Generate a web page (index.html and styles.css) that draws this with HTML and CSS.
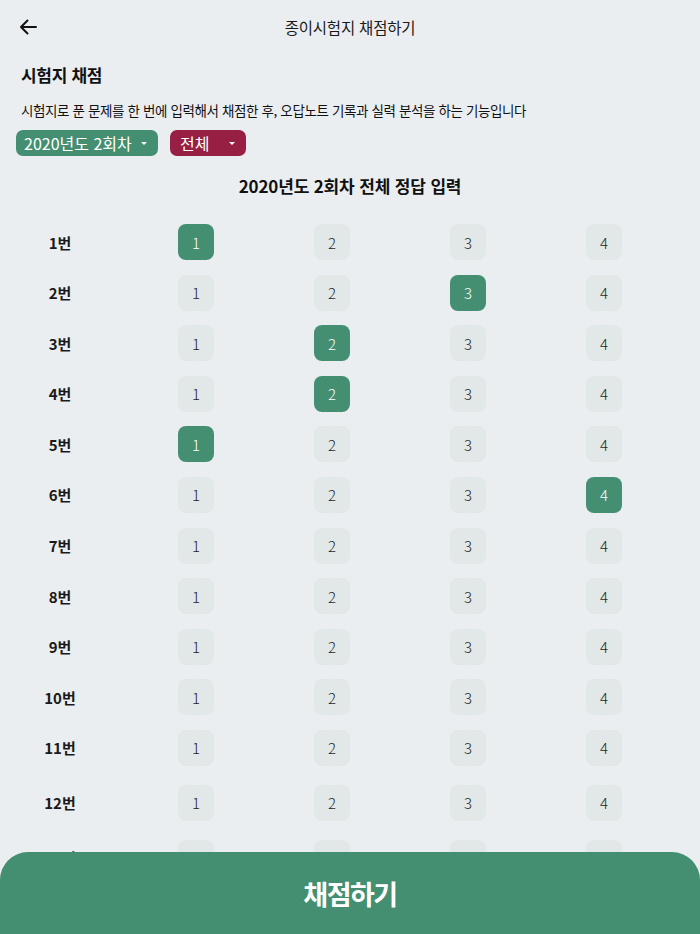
FILE: index.html
```html
<!DOCTYPE html>
<html lang="ko">
<head>
<meta charset="utf-8">
<title>종이시험지 채점하기</title>
<link rel="stylesheet" href="styles.css">
</head>
<body>
<header class="header">
  <svg class="back" width="18" height="16" viewBox="0 0 18 16" aria-hidden="true">
    <path d="M17 8 H2 M8.5 1.5 L2 8 L8.5 14.5" fill="none" stroke="#111" stroke-width="2" stroke-linecap="round" stroke-linejoin="round"/>
  </svg>
  <div class="header-title">종이시험지 채점하기</div>
  <div></div>
</header>

<section class="intro">
  <h1 class="intro-title">시험지 채점</h1>
  <p class="intro-desc">시험지로 푼 문제를 한 번에 입력해서 채점한 후, 오답노트 기록과 실력 분석을 하는 기능입니다</p>
</section>

<div class="filters">
  <div class="dropdown dropdown-green">2020년도 2회차 <span class="caret"></span></div>
  <div class="dropdown dropdown-red">전체 <span class="caret"></span></div>
</div>

<h2 class="section-title">2020년도 2회차 전체 정답 입력</h2>

<div class="rows">
  <div class="row"><span class="label">1번</span><span class="opt on">1</span><span class="opt">2</span><span class="opt">3</span><span class="opt">4</span></div>
  <div class="row"><span class="label">2번</span><span class="opt">1</span><span class="opt">2</span><span class="opt on">3</span><span class="opt">4</span></div>
  <div class="row"><span class="label">3번</span><span class="opt">1</span><span class="opt on">2</span><span class="opt">3</span><span class="opt">4</span></div>
  <div class="row"><span class="label">4번</span><span class="opt">1</span><span class="opt on">2</span><span class="opt">3</span><span class="opt">4</span></div>
  <div class="row"><span class="label">5번</span><span class="opt on">1</span><span class="opt">2</span><span class="opt">3</span><span class="opt">4</span></div>
  <div class="row"><span class="label">6번</span><span class="opt">1</span><span class="opt">2</span><span class="opt">3</span><span class="opt on">4</span></div>
  <div class="row"><span class="label">7번</span><span class="opt">1</span><span class="opt">2</span><span class="opt">3</span><span class="opt">4</span></div>
  <div class="row"><span class="label">8번</span><span class="opt">1</span><span class="opt">2</span><span class="opt">3</span><span class="opt">4</span></div>
  <div class="row"><span class="label">9번</span><span class="opt">1</span><span class="opt">2</span><span class="opt">3</span><span class="opt">4</span></div>
  <div class="row"><span class="label">10번</span><span class="opt">1</span><span class="opt">2</span><span class="opt">3</span><span class="opt">4</span></div>
  <div class="row"><span class="label">11번</span><span class="opt">1</span><span class="opt">2</span><span class="opt">3</span><span class="opt">4</span></div>
  <div class="row row-wide"><span class="label">12번</span><span class="opt">1</span><span class="opt">2</span><span class="opt">3</span><span class="opt">4</span></div>
  <div class="row row-wide"><span class="label">13번</span><span class="opt">1</span><span class="opt">2</span><span class="opt">3</span><span class="opt">4</span></div>
</div>

<button class="submit">채점하기</button>
</body>
</html>
```

FILE: styles.css
```css
html, body {
  margin: 0;
  padding: 0;
}

body {
  background: #ebeef0;
  font-family: "Noto Sans CJK KR", "Noto Sans", sans-serif;
  color: #111;
  overflow: hidden;
}

.header {
  height: 54px;
  display: grid;
  grid-template-columns: 1fr auto 1fr;
  align-items: center;
  padding: 0 19px;
}

.back {
  display: block;
}

.header-title {
  font-size: 15.5px;
  letter-spacing: -0.2px;
  line-height: 20px;
  color: #1a1a1a;
}

.intro {
  padding: 0 21px;
}

.intro-title {
  margin: 9px 0 0;
  font-size: 17px;
  font-weight: 700;
  line-height: 24px;
  letter-spacing: -0.3px;
}

.intro-desc {
  margin: 13px 0 0;
  font-size: 13.5px;
  line-height: 20px;
  letter-spacing: -0.38px;
  color: #111;
}

.filters {
  margin-top: 10px;
  padding-left: 16px;
  display: flex;
  gap: 12px;
}

.dropdown {
  height: 26px;
  border-radius: 7px;
  color: #fff;
  font-size: 16px;
  line-height: 26px;
  display: flex;
  align-items: center;
  box-sizing: border-box;
}

.dropdown-green {
  background: #448f72;
  padding: 0 0 0 8px;
  width: 142px;
}

.dropdown-red {
  background: #981f44;
  padding: 0 0 0 10px;
  width: 76px;
}

.caret {
  width: 0;
  height: 0;
  border-left: 3px solid transparent;
  border-right: 3px solid transparent;
  border-top: 3px solid #fff;
  margin-left: auto;
  margin-right: 11px;
}

.section-title {
  margin: 18px 0 0;
  text-align: center;
  font-size: 17px;
  font-weight: 700;
  line-height: 24px;
  letter-spacing: -0.15px;
}

.rows {
  margin: 26px 0 0 -8px;
  display: flex;
  flex-direction: column;
  gap: 14.6px;
}

.row {
  display: grid;
  grid-template-columns: repeat(5, 136px);
  height: 36px;
  align-items: center;
  justify-items: center;
}

.row-wide {
  margin-top: 4.4px;
}

.label {
  font-size: 15px;
  font-weight: 700;
  color: #1a1a1a;
}

.opt {
  width: 36px;
  height: 36px;
  border-radius: 8px;
  background: #e1e8e7;
  color: #1e1e1e;
  font-size: 15px;
  display: flex;
  align-items: center;
  justify-content: center;
  font-weight: 300;
}

.opt.on {
  background: #448f72;
  color: #fff;
}

.submit {
  position: fixed;
  left: 0;
  right: 0;
  bottom: 0;
  height: 82px;
  border: none;
  border-radius: 28px 28px 0 0;
  background: #448f72;
  color: #fff;
  font-family: "Noto Sans CJK KR", "Noto Sans", sans-serif;
  font-size: 27px;
  font-weight: 700;
  letter-spacing: -1.5px;
  padding: 0;
}
```
